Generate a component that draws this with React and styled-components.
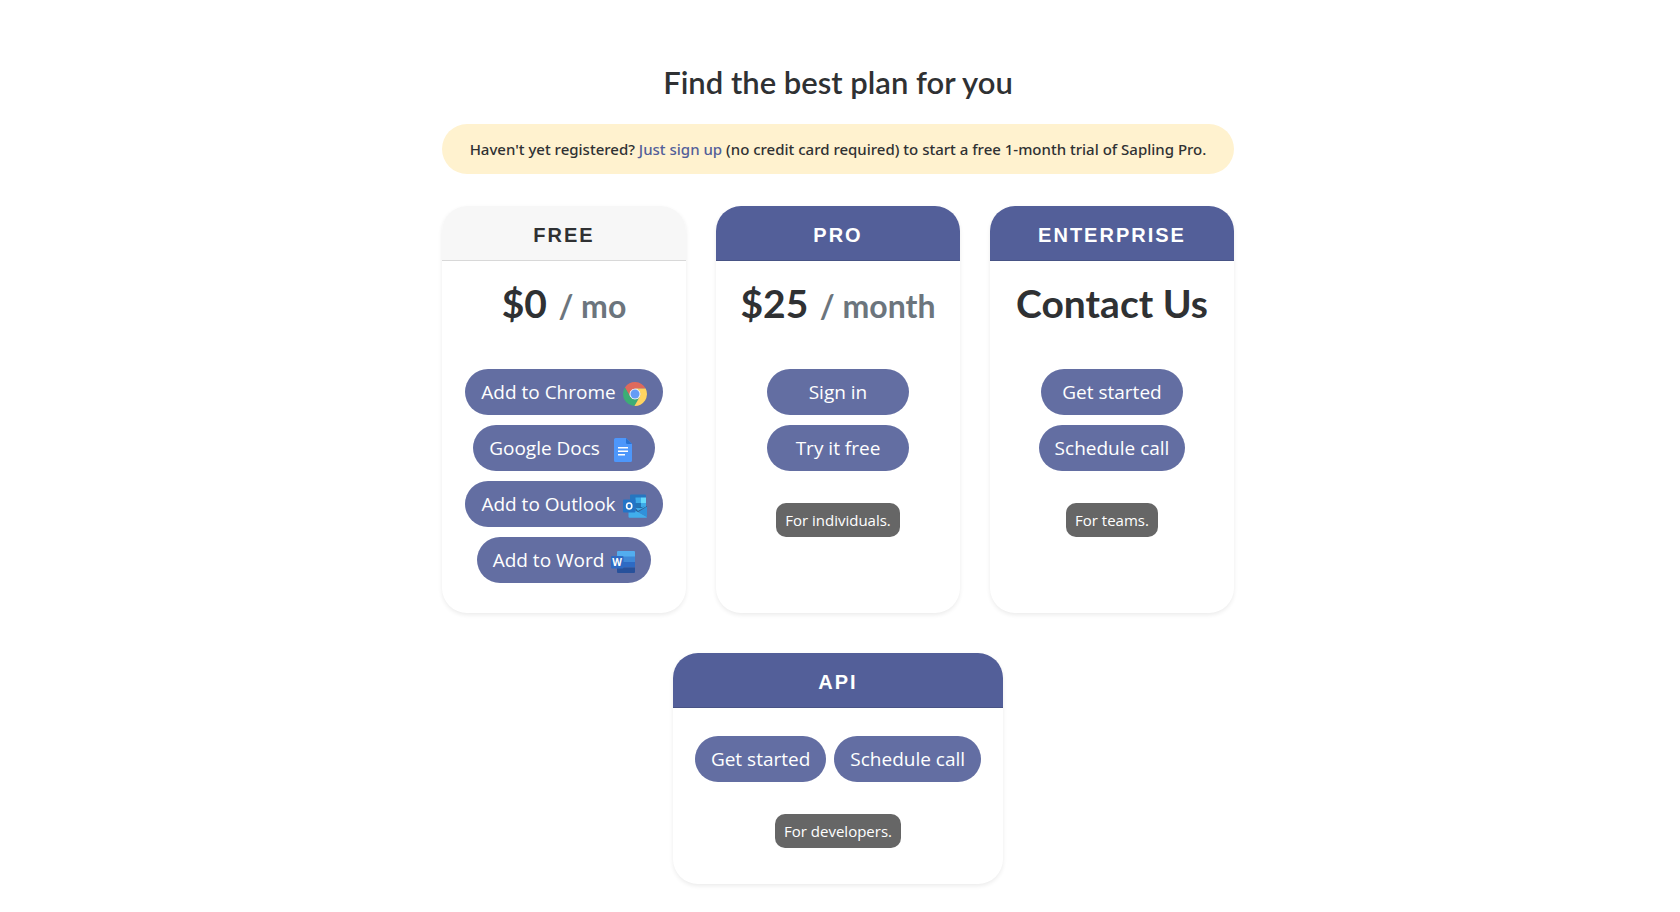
import React from "react";
import styled, { createGlobalStyle } from "styled-components";

const GlobalStyle = createGlobalStyle`
  *,
  *::before,
  *::after {
    box-sizing: border-box;
  }

  body {
    margin: 0;
    padding-right: 4px;
    background: #ffffff;
    color: #2f3133;
    font-family: "Open Sans", "Noto Sans", sans-serif;
    font-size: 15px;
    line-height: 24px;
  }
`;

const ChromeIcon = () => (
  <Icon viewBox="0 0 48 48" aria-hidden="true">
    <circle cx="24" cy="24" r="12" fill="#f1f1f1" />
    <path
      fill="#db5a4b"
      d="M24 13H45.3A24 24 0 0 0 3.81 11.05L14.47 29.5A11 11 0 0 1 24 13Z"
    />
    <path
      fill="#27a567"
      d="M14.47 29.5L3.81 11.05A24 24 0 0 0 22.87 47.95L33.53 29.5A11 11 0 0 1 14.47 29.5Z"
    />
    <path
      fill="#ffd04f"
      d="M33.53 29.5L22.87 47.95A24 24 0 0 0 45.3 13H24A11 11 0 0 1 33.53 29.5Z"
    />
    <circle cx="24" cy="24" r="9" fill="#5592f5" />
  </Icon>
);

const DocsIcon = () => (
  <Icon viewBox="0 0 24 24" aria-hidden="true" $inset>
    <path
      fill="#3a8cfb"
      d="M4.6 0H15l6 6v16.4a1.6 1.6 0 0 1-1.6 1.6H4.6A1.6 1.6 0 0 1 3 22.4V1.6A1.6 1.6 0 0 1 4.6 0Z"
    />
    <path fill="#1264cf" d="M15 0l6 6h-4.5A1.5 1.5 0 0 1 15 4.5Z" />
    <path fill="#ffffff" d="M7 9h10v1.6H7zM7 12.5h10v1.6H7zM7 16h7v1.6H7z" />
  </Icon>
);

const OutlookIcon = () => (
  <Icon viewBox="0 0 24 24" aria-hidden="true">
    <path fill="#0f68ba" d="M8 .5h14a1 1 0 0 1 1 1V13H7V1.5a1 1 0 0 1 1-1Z" />
    <path fill="#28a0e6" d="M12.5 3.5H18V9h-5.5z" />
    <path fill="#54d5fb" d="M18 3.5h5V9h-5z" />
    <path fill="#0c66b0" d="M12.5 9H18v5h-5.5z" />
    <path fill="#28a0e6" d="M18 9h5v5h-5z" />
    <path fill="#2da6ea" d="M5.5 12.5L24 23a1 1 0 0 1-1 .8H6.5a1 1 0 0 1-1-1Z" />
    <path fill="#1a86d6" d="M24 12.5V23l-9-5Z" />
    <path fill="#0f4f8e" d="M12.5 14.5L23.5 12h.5v.6L15 18l-2.500-1.500z" />
    <path fill="#28a0e6" d="M12.5 14h6L23 11v1.400L15 17z" />
    <rect y="5.5" width="12.5" height="13" rx="1" fill="#0c66c2" />
    <ellipse
      cx="6.2"
      cy="12"
      rx="2.6"
      ry="3"
      fill="none"
      stroke="#ffffff"
      strokeWidth="1.6"
    />
  </Icon>
);

const WordIcon = () => (
  <Icon viewBox="0 0 24 24" aria-hidden="true">
    <path fill="#41a5ee" d="M7 1h16a1 1 0 0 1 1 1v5H6V2a1 1 0 0 1 1-1Z" />
    <path fill="#2b7cd3" d="M6 6.5h18V12H6z" />
    <path fill="#185abd" d="M6 12h18v5.5H6z" />
    <path fill="#103f91" d="M6 17.5h18V22a1 1 0 0 1-1 1H7a1 1 0 0 1-1-1Z" />
    <rect y="6" width="12.5" height="12.5" rx="1" fill="#185abd" />
    <text
      x="6.2"
      y="15.8"
      fill="#ffffff"
      fontFamily="Open Sans, sans-serif"
      fontSize="10"
      fontWeight="700"
      textAnchor="middle"
    >
      W
    </text>
  </Icon>
);

const plans = [
  {
    name: "FREE",
    price: "$0",
    period: "/ mo",
    muted: true,
    actions: [
      { label: "Add to Chrome", icon: <ChromeIcon /> },
      { label: "Google Docs", icon: <DocsIcon /> },
      { label: "Add to Outlook", icon: <OutlookIcon /> },
      { label: "Add to Word", icon: <WordIcon /> },
    ],
  },
  {
    name: "PRO",
    price: "$25",
    period: "/ month",
    actions: [{ label: "Sign in" }, { label: "Try it free" }],
    audience: "For individuals.",
  },
  {
    name: "ENTERPRISE",
    price: "Contact Us",
    actions: [{ label: "Get started" }, { label: "Schedule call" }],
    audience: "For teams.",
  },
];

const App = () => (
  <>
    <GlobalStyle />
    <Page>
      <Title>Find the best plan for you</Title>
      <Banner>
        Haven't yet registered? <SignUpLink href="#signup">Just sign up</SignUpLink>{" "}
        (no credit card required) to start a free 1-month trial of Sapling Pro.
      </Banner>
      <Deck>
        {plans.map(({ name, price, period, muted, actions, audience }) => (
          <Card key={name}>
            <CardHeader $muted={muted}>{name}</CardHeader>
            <CardBody>
              <Price>
                {price} {period && <Period>{period}</Period>}
              </Price>
              <Actions>
                {actions.map(({ label, icon }) => (
                  <Button key={label} type="button" $wide={!icon}>
                    {label} {icon}
                  </Button>
                ))}
              </Actions>
              {audience && <Audience>{audience}</Audience>}
            </CardBody>
          </Card>
        ))}
      </Deck>
      <ApiCard>
        <CardHeader>API</CardHeader>
        <ApiBody>
          <ApiActions>
            <Button type="button">Get started</Button>
            <Button type="button">Schedule call</Button>
          </ApiActions>
          <Audience>For developers.</Audience>
        </ApiBody>
      </ApiCard>
    </Page>
  </>
);

const Page = styled.main`
  max-width: 824px;
  margin: 0 auto;
  padding: 62px 16px 28px;
  display: flex;
  flex-direction: column;
`;

const Title = styled.h1`
  margin: 0 0 22px;
  font-family: Lato, sans-serif;
  font-size: 31px;
  font-weight: 600;
  line-height: 40px;
  text-align: center;
`;

const Banner = styled.div`
  margin-bottom: 32px;
  padding: 13px 16px;
  border-radius: 25px;
  background: #fff2cf;
  font-family: "Noto Sans", "Open Sans", sans-serif;
  font-weight: 500;
  text-align: center;
`;

const SignUpLink = styled.a`
  color: #535f99;
  text-decoration: none;
`;

const Deck = styled.div`
  display: grid;
  grid-template-columns: repeat(auto-fit, minmax(240px, 1fr));
  gap: 30px;
  margin-bottom: 40px;
`;

const Card = styled.section`
  display: flex;
  flex-direction: column;
  overflow: hidden;
  border-radius: 25px;
  background: #ffffff;
  box-shadow: 0 2px 4px rgba(0, 0, 0, 0.08);
  text-align: center;
`;

const ApiCard = styled(Card)`
  align-self: center;
  width: 330px;
  max-width: 100%;
`;

const CardHeader = styled.h2`
  margin: 0;
  padding: 17px 20px 13px;
  border-bottom: 1px solid rgba(0, 0, 0, 0.125);
  background: ${({ $muted }) => ($muted ? "#f7f7f7" : "#535f99")};
  color: ${({ $muted }) => ($muted ? "#2f3133" : "#ffffff")};
  font-family: "Liberation Sans", Arial, sans-serif;
  font-size: 20px;
  font-weight: 700;
  letter-spacing: 2px;
  line-height: 24px;
`;

const CardBody = styled.div`
  display: flex;
  flex-direction: column;
  align-items: center;
  padding: 18px 16px 30px;
`;

const ApiBody = styled(CardBody)`
  padding: 28px 16px 36px;
`;

const Price = styled.h3`
  margin: 0 0 42px;
  font-family: Lato, sans-serif;
  font-size: 39px;
  font-weight: 700;
  line-height: 48px;
  white-space: nowrap;
`;

const Period = styled.small`
  margin-left: 2px;
  color: #6c757d;
  font-size: 32px;
  line-height: 32px;
`;

const Actions = styled.div`
  display: flex;
  flex-direction: column;
  align-items: center;
  gap: 10px;
`;

const ApiActions = styled.div`
  display: flex;
  flex-wrap: wrap;
  justify-content: center;
  gap: 8px;
`;

const Button = styled.button`
  min-width: ${({ $wide }) => ($wide ? "142px" : "0")};
  height: 46px;
  padding: 8px 16px;
  border: 0;
  border-radius: 23px;
  background: #535f99;
  color: #ffffff;
  font-family: inherit;
  font-size: 19px;
  line-height: 30px;
  white-space: nowrap;
  opacity: 0.9;
  cursor: pointer;

  &:hover {
    opacity: 1;
  }
`;

const Icon = styled.svg`
  width: 24px;
  height: 24px;
  margin: ${({ $inset }) => ($inset ? "0 4px 0 6px" : "0 0 0 2px")};
  vertical-align: middle;
`;

const Audience = styled.span`
  margin-top: 32px;
  padding: 5px 9px;
  border-radius: 10px;
  background: #666666;
  color: #ffffff;
`;

export default App;
